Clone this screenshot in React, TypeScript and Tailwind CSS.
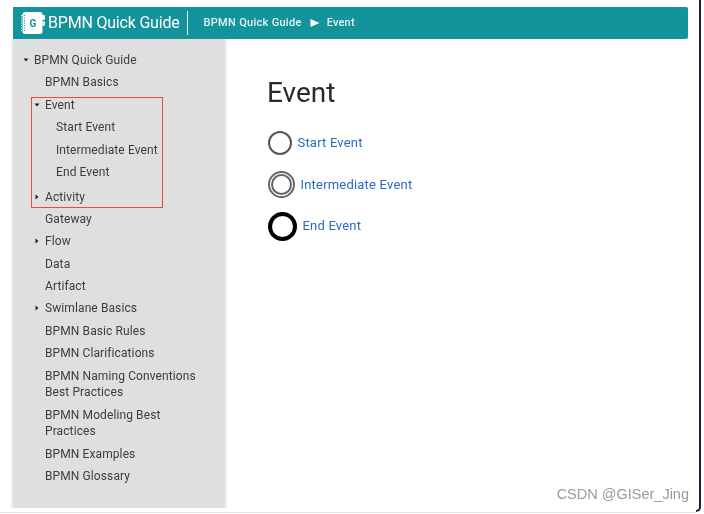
import React from "react";

const Caret = ({open}: {open?: boolean}) => (
  <svg width="6" height="6" viewBox="0 0 6 6" className="absolute left-[-11px] top-[5px] text-[#222]">
    <path d={open ? "M0.5 1.5H5.5L3 4.5Z" : "M1.5 0.5V5.5L4.5 3Z"} fill="currentColor" />
  </svg>
);

const NavItem = ({
  label,
  caret,
  sub,
  tall,
}: {
  label: React.ReactNode;
  caret?: "open" | "closed";
  sub?: boolean;
  tall?: boolean;
}) => (
  <div className={`flex ${tall ? "h-[39px]" : "h-[22.4px]"} items-start ${sub ? "pl-[11px]" : ""}`}>
    <div className="relative leading-[16.5px]">
      {caret && <Caret open={caret === "open"} />}
      {label}
    </div>
  </div>
);

const EventRow = ({label, ring}: {label: string; ring: React.ReactNode}) => (
  <div className="flex h-[30px] items-center gap-[5.5px]">
    {ring}
    <span className="text-[13px] tracking-[0.2px] text-[#2a69c4]">{label}</span>
  </div>
);

const Logo = () => (
  <div className="relative ml-[8px] flex h-[22px] w-[24px] items-center justify-center">
    <svg width="24" height="22" viewBox="0 0 24 22" className="absolute inset-0">
      <rect x="1.5" y="0" width="20" height="22" rx="2.5" fill="#fff" />
      <rect x="21" y="3" width="3" height="5" rx="1" fill="#fff" />
      <rect x="21" y="9" width="3" height="5" rx="1" fill="#d5eced" />
      <path d="M3.5 3V19" stroke="#13949c" strokeWidth="1" strokeDasharray="1 1.5" />
      <path d="M0 3V19" stroke="#fff" strokeWidth="2" strokeDasharray="1 1.5" />
    </svg>
    <span className="relative text-[10px] font-bold text-[#13949c]">G</span>
  </div>
);

export default function App() {
  return (
    <div className="relative h-[514px] w-[704px] overflow-hidden bg-white font-['Roboto',sans-serif] blur-[0.5px]">
      <div className="flex w-[688px] flex-col pl-[13px] pt-[7px]">
        <header className="flex h-[32px] items-center rounded-r-[2px] bg-[#13949c] text-white">
          <Logo />
          <span className="ml-[3px] text-[16px] tracking-[-0.2px]">BPMN Quick Guide</span>
          <div className="ml-[7px] h-[24px] w-px bg-white" />
          <span className="ml-[16px] text-[11px] font-medium tracking-[0.3px] text-[#e6f4f5]">BPMN Quick Guide</span>
          <svg width="10" height="10" viewBox="0 0 10 10" className="ml-[8px]">
            <path d="M0.5 1V9L9.5 5Z" fill="#fff" />
          </svg>
          <span className="ml-[7px] text-[11px] font-medium tracking-[0.2px] text-[#e6f4f5]">Event</span>
        </header>
        <div className="flex h-[469px]">
          <aside className="w-[212px] bg-[#dfdfdf] pl-[32px] pt-[13px] text-[12px] tracking-[0.1px] text-[#3d3d3d] shadow-[-2px_0_0_#f1f1f1,2px_0_0_#f1f1f1]">
            <div className="-ml-[11px]">
              <NavItem label="BPMN Quick Guide" caret="open" />
            </div>
            <NavItem label="BPMN Basics" />
            <div className="-ml-[14px] h-[111px] w-[132px] border-[1.5px] border-[#e8494b] pl-[13px]">
              <div className="-mt-[1px]">
                <NavItem label="Event" caret="open" />
                <NavItem label="Start Event" sub />
                <NavItem label="Intermediate Event" sub />
                <NavItem label="End Event" sub />
                <div className="h-[2.6px]" />
                <NavItem label="Activity" caret="closed" />
              </div>
            </div>
            <div className="pt-[3px]">
              <NavItem label="Gateway" />
              <NavItem label="Flow" caret="closed" />
              <NavItem label="Data" />
              <NavItem label="Artifact" />
              <NavItem label="Swimlane Basics" caret="closed" />
              <NavItem label="BPMN Basic Rules" />
              <NavItem label="BPMN Clarifications" />
              <NavItem
                tall
                label={
                  <>
                    BPMN Naming Conventions
                    <br />
                    Best Practices
                  </>
                }
              />
              <NavItem
                tall
                label={
                  <>
                    BPMN Modeling Best
                    <br />
                    Practices
                  </>
                }
              />
              <NavItem label="BPMN Examples" />
              <NavItem label="BPMN Glossary" />
            </div>
          </aside>
          <main className="flex-1 pl-[43px] pt-[33px]">
            <h1 className="-ml-[1px] text-[28px] leading-[42px] text-[#2b2b2b]">Event</h1>
            <div className="mt-[14px] flex flex-col gap-[11.5px]">
              <EventRow
                label="Start Event"
                ring={<div className="size-[24px] rounded-full border-2 border-[#555]" />}
              />
              <EventRow
                label="Intermediate Event"
                ring={
                  <div className="flex size-[27px] items-center justify-center rounded-full border-2 border-[#666]">
                    <div className="size-[21px] rounded-full border-2 border-[#666]" />
                  </div>
                }
              />
              <EventRow
                label="End Event"
                ring={<div className="size-[29px] rounded-full border-[4.5px] border-black" />}
              />
            </div>
          </main>
        </div>
      </div>
      <div className="absolute bottom-[2px] right-[3px] top-0 w-[5px] rounded-br-[5px] border-b-2 border-r-2 border-[#1a1f4a]" />
      <div className="absolute bottom-[1px] left-0 right-[8px] h-px bg-[#e5e5e5]" />
      <div className="absolute bottom-[8px] right-[15px] font-['Liberation_Sans',sans-serif] text-[14.5px] text-[#9a9a9a]">
        CSDN @GISer_Jing
      </div>
    </div>
  );
}
